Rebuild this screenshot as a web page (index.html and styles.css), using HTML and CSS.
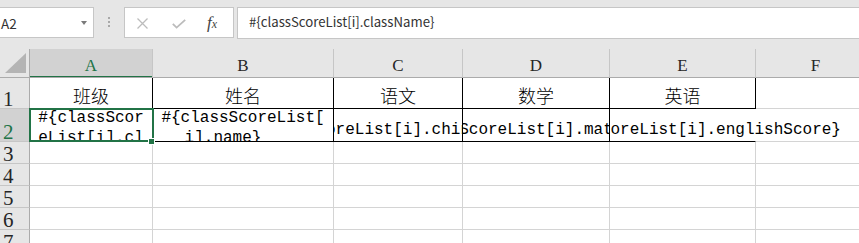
FILE: index.html
```html
<!DOCTYPE html>
<html>
<head>
<meta charset="utf-8">
<link rel="stylesheet" href="styles.css">
</head>
<body>
<div class="toolbar">
  <div class="namebox"><span class="nb-text">A2</span><span class="nb-arrow"></span></div>
  <div class="grip"><i></i><i></i><i></i></div>
  <div class="fbtns">
    <svg class="ico-x" width="11" height="11" viewBox="0 0 11 11"><path d="M0.5 0.5L10.5 10.5M10.5 0.5L0.5 10.5" stroke="#bcbcbc" stroke-width="1.3" fill="none"/></svg>
    <svg class="ico-ok" width="14" height="10" viewBox="0 0 14 10"><path d="M0.8 4.8L4.6 8.6L13.2 0.8" stroke="#bcbcbc" stroke-width="1.8" fill="none"/></svg>
    <span class="fx">f<span class="fx-x">x</span></span>
  </div>
  <div class="formula">#{classScoreList[i].className}</div>
</div>
<div class="sheet">
  <div class="c corner"><svg width="29" height="28" viewBox="0 0 29 28"><polygon points="5,24 26,24 26,4" fill="#b4b4b4"/></svg></div>
  <div class="c h sel">A</div>
  <div class="c h">B</div>
  <div class="c h">C</div>
  <div class="c h">D</div>
  <div class="c h">E</div>
  <div class="c h">F</div>

  <div class="c r">1</div>
  <div class="c t cj">班级</div>
  <div class="c t cj">姓名</div>
  <div class="c t cj">语文</div>
  <div class="c t cj">数学</div>
  <div class="c t cj">英语</div>
  <div class="c"></div>

  <div class="c r sel">2</div>
  <div class="c t w"><div class="lines"><div>#{classScor</div><div>eList[i].cl</div><div>assName}</div></div></div>
  <div class="c t w"><div class="lines"><div>#{classScoreList[</div><div class="l2b">i].name}</div></div></div>
  <div class="c t m"><span>#{classScoreList[i].chineseScore}</span></div>
  <div class="c t m"><span>#{classScoreList[i].mathScore}</span></div>
  <div class="c t m ov"><span>#{classScoreList[i].englishScore}</span></div>
  <div class="c"></div>

  <div class="c r">3</div><div class="c"></div><div class="c"></div><div class="c"></div><div class="c"></div><div class="c"></div><div class="c"></div>
  <div class="c r">4</div><div class="c"></div><div class="c"></div><div class="c"></div><div class="c"></div><div class="c"></div><div class="c"></div>
  <div class="c r">5</div><div class="c"></div><div class="c"></div><div class="c"></div><div class="c"></div><div class="c"></div><div class="c"></div>
  <div class="c r">6</div><div class="c"></div><div class="c"></div><div class="c"></div><div class="c"></div><div class="c"></div><div class="c"></div>
  <div class="c r">7</div><div class="c"></div><div class="c"></div><div class="c"></div><div class="c"></div><div class="c"></div><div class="c"></div>

  <div class="selbox"><div class="handle"></div></div>
</div>
</body>
</html>
```
FILE: styles.css
```css
* { box-sizing: border-box; }
html, body { margin: 0; padding: 0; }
body {
  width: 859px;
  height: 243px;
  overflow: hidden;
  background: #e6e6e6;
  font-family: "Noto Sans CJK SC", "Noto Sans", sans-serif;
}

/* ---------- formula bar ---------- */
.toolbar {
  height: 49px;
  display: flex;
  align-items: flex-start;
  padding-top: 7px;
}
.namebox {
  margin-left: -1px;
  width: 95px;
  height: 31px;
  background: #fff;
  border: 1px solid #c6c6c6;
  display: flex;
  align-items: center;
  padding-left: 1px;
  font-size: 13.5px;
  color: #333;
  flex-shrink: 0;
}
.nb-arrow {
  margin-left: auto;
  margin-right: 6px;
  width: 0;
  height: 0;
  border-left: 3.5px solid transparent;
  border-right: 3.5px solid transparent;
  border-top: 4px solid #7a7a7a;
}
.grip {
  margin-left: 14px;
  margin-top: 10px;
  width: 2px;
  display: flex;
  flex-direction: column;
  gap: 2px;
  flex-shrink: 0;
}
.grip i {
  display: block;
  width: 2px;
  height: 2px;
  background: #a8a8a8;
}
.fbtns {
  margin-left: 14px;
  width: 110px;
  height: 31px;
  background: #fff;
  border: 1px solid #c6c6c6;
  display: flex;
  align-items: center;
  padding-left: 12px;
  flex-shrink: 0;
}
.ico-x { margin-top: 1px; }
.ico-ok { margin-left: 24px; margin-top: 3px; }
.fx {
  margin-left: 21px;
  font-family: "Liberation Serif", serif;
  font-style: italic;
  font-size: 17px;
  color: #444;
  line-height: 1;
}
.fx-x { font-size: 12px; }
.formula {
  margin-left: 3px;
  width: 640px;
  height: 32px;
  background: #fff;
  border: 1px solid #c6c6c6;
  padding-left: 11px;
  font-size: 13.2px;
  line-height: 28px;
  color: #333;
  flex-shrink: 0;
  white-space: nowrap;
}

/* ---------- sheet grid ---------- */
.sheet {
  position: relative;
  display: grid;
  grid-template-columns: 30px 123px 181px 129px 147px 146px 120px;
  grid-template-rows: 29px 31px 33px repeat(5, 22px);
  width: 876px;
  background: #fff;
}
.c {
  border-right: 1px solid #d4d4d4;
  border-bottom: 1px solid #d4d4d4;
  display: flex;
  overflow: hidden;
  min-width: 0;
}
.corner {
  background: #e6e6e6;
  border-right-color: #ababab;
  border-bottom-color: #ababab;
}
.corner svg { display: block; }
.h {
  background: #e6e6e6;
  border-right-color: #c6c6c6;
  border-bottom-color: #ababab;
  justify-content: center;
  align-items: flex-end;
  padding-bottom: 4px;
  font-family: "Liberation Serif", serif;
  font-size: 17px;
  line-height: 14px;
  color: #262626;
}
.h.sel {
  background: #d2d2d2;
  color: #217346;
  box-shadow: inset 0 -1px 0 #217346;
}
.r {
  background: #e6e6e6;
  border-right-color: #ababab;
  border-bottom-color: #c6c6c6;
  align-items: flex-end;
  padding: 0 0 1px 3px;
  font-family: "Liberation Serif", serif;
  font-size: 21px;
  line-height: 16px;
  color: #262626;
}
.r.sel {
  background: #d2d2d2;
  color: #217346;
}
.t {
  border-right-color: #000;
  border-bottom-color: #000;
}
.cj {
  justify-content: center;
  align-items: flex-end;
  padding-bottom: 2px;
  font-family: "Noto Sans CJK SC", sans-serif;
  font-weight: 300;
  font-size: 18px;
  line-height: 22px;
  color: #000;
}
.m {
  justify-content: center;
  align-items: flex-end;
  padding-bottom: 1px;
  font-family: "Liberation Mono", monospace;
  font-size: 16px;
  line-height: 20px;
  white-space: nowrap;
  color: #000;
}
.m span { flex-shrink: 0; }
.ov {
  overflow: visible;
  clip-path: inset(0 -300px 0 0);
  border-right-color: transparent;
}
.w {
  justify-content: center;
  align-items: flex-start;
  font-family: "Liberation Mono", monospace;
  font-size: 16px;
  line-height: 20px;
  color: #000;
}
.lines {
  margin-top: -1px;
  display: flex;
  flex-direction: column;
  align-items: center;
  white-space: pre;
}
.l2b { margin-right: 40px; }

.selbox {
  position: absolute;
  left: 29px;
  top: 59px;
  width: 125px;
  height: 34px;
  border: 2px solid #217346;
}
.handle {
  position: absolute;
  left: 117px;
  top: 28px;
  width: 7px;
  height: 7px;
  background: #217346;
  border: 1px solid #fff;
}
```
